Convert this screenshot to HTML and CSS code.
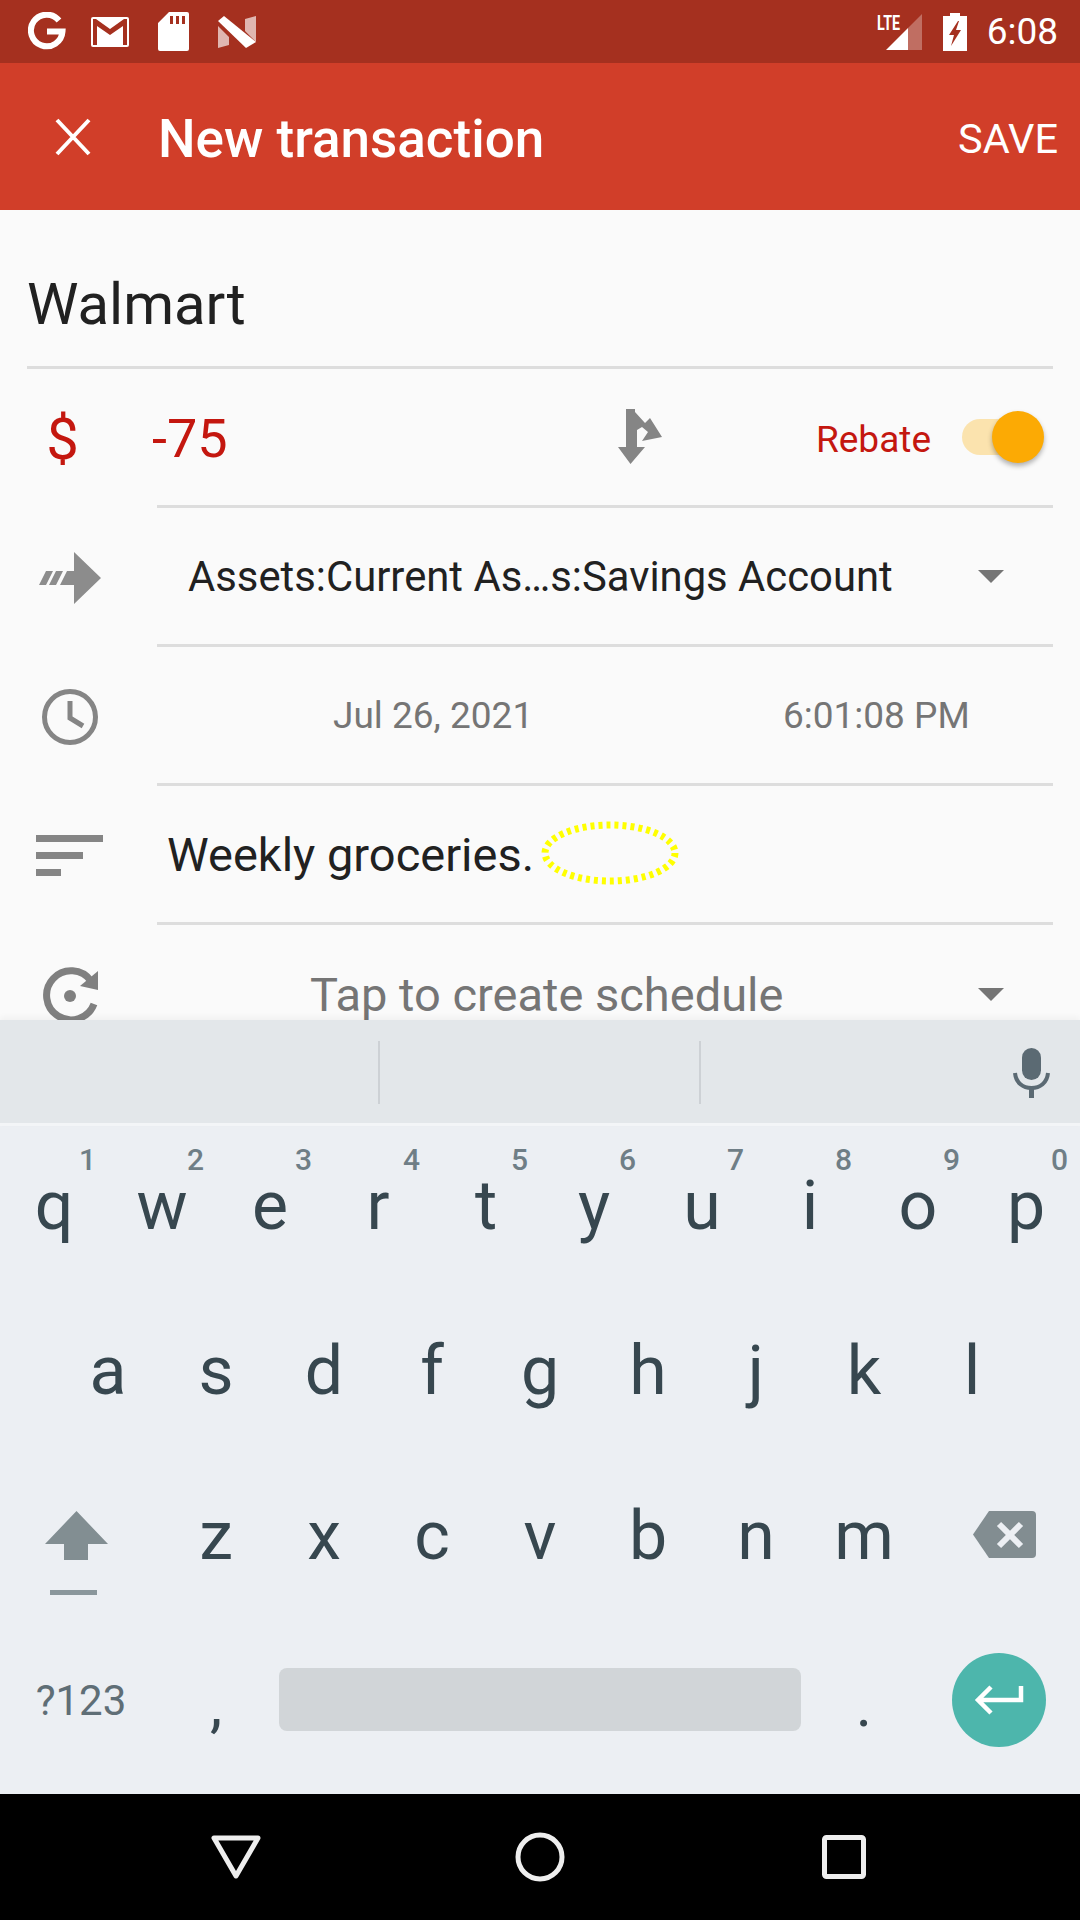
FILE: index.html
```html
<!DOCTYPE html>
<html>
<head>
	<meta charset="utf-8">
	<title>New transaction</title>
	<link rel="stylesheet" href="styles.css">
</head>
<body>
<div class="statusbar">
	<svg class="st-g" width="38" height="39" viewBox="0 0 38 39"><path d="M31 8.5A15.8 15.8 0 1 0 34.5 19.5H19" fill="none" stroke="#fff" stroke-width="6"/></svg>
	<svg class="st-mail" width="38" height="30" viewBox="0 0 38 30"><path fill="#fff" fill-rule="evenodd" d="M2 0h34a2 2 0 0 1 2 2v26a2 2 0 0 1-2 2H2a2 2 0 0 1-2-2V2a2 2 0 0 1 2-2zM2 2v26h4V9l13 9 13-9v19h4V2h-3L19 12 5 2z"/></svg>
	<svg class="st-sd" width="31" height="39" viewBox="0 0 31 39"><path fill="#fff" fill-rule="evenodd" d="M11 0h18a2 2 0 0 1 2 2v35a2 2 0 0 1-2 2H2a2 2 0 0 1-2-2V11zM12 4v8h3V4zM18 4v8h3V4zM24 4v8h3V4z"/></svg>
	<svg class="st-n" width="38" height="32" viewBox="0 0 38 32"><path fill="#fff" opacity=".65" d="M0 10l11 11v8l-11 3zM27 3l11-3v26l-11-11z"/><path fill="#fff" d="M0 5l6-5 32 26-10 6z"/></svg>
	<span class="st-fill"></span>
	<svg class="st-signal" width="46" height="38" viewBox="0 0 46 38">
		<text x="0" y="17" class="lte" textLength="23" lengthAdjust="spacingAndGlyphs">LTE</text>
		<path fill="#fff" d="M9 37L31 15v22z"/><path fill="#fff" opacity=".3" d="M31 15L45 1v36H31z"/>
	</svg>
	<svg class="st-batt" width="24" height="38" viewBox="0 0 24 38"><path fill="#fff" fill-rule="evenodd" d="M7 0h10v3h7v35H0V3h7zM15 8L6 22h5l-3 11 10-16h-5l3-9z"/></svg>
	<span class="st-time">6:08</span>
</div>

<div class="appbar">
	<svg class="close" width="36" height="38" viewBox="0 0 36 38"><path d="M2 2l32 34M34 2L2 36" stroke="#fff" stroke-width="4" fill="none"/></svg>
	<span class="title">New transaction</span>
	<span class="save">SAVE</span>
</div>

<div class="form">
	<div class="name">Walmart</div>

	<div class="row">
		<div class="ico dollar">$</div>
		<div class="cell">
			<span class="amount">-75</span>
			<svg class="split" width="46" height="56" viewBox="0 0 46 56"><path fill="#858585" d="M8 0h9v3l10 11 5-5 12 19-20 4 6-9-6-5-5 3v17h8L12.500 55 0 38h8z"/></svg>
			<span class="rebate">Rebate</span>
			<span class="toggle"><span class="thumb"></span></span>
		</div>
	</div>

	<div class="row">
		<div class="ico">
			<svg width="62" height="52" viewBox="0 0 62 52"><path fill="#8c8c8c" d="M35 0l27 26-27 26V33H21l7-14h7zM7 19h7l-7 14H0zM17 19h7l-7 14h-7z"/></svg>
		</div>
		<div class="cell">
			<span class="account">Assets:Current As…s:Savings Account</span>
			<span class="caret"></span>
		</div>
	</div>

	<div class="row">
		<div class="ico">
			<svg width="58" height="58" viewBox="0 0 58 58"><circle cx="29" cy="29" r="25.500" fill="none" stroke="#858585" stroke-width="5"/><path d="M29 13v17l13 8" fill="none" stroke="#858585" stroke-width="5"/></svg>
		</div>
		<div class="cell dates">
			<span class="date">Jul 26, 2021</span>
			<span class="time">6:01:08 PM</span>
		</div>
	</div>

	<div class="row">
		<div class="ico lines"><i class="l1"></i><i class="l2"></i><i class="l3"></i></div>
		<div class="cell">
			<span class="desc">Weekly groceries.</span>
			<svg class="scribble" width="140" height="68" viewBox="0 0 140 68"><ellipse cx="70" cy="33" rx="65" ry="28" fill="none" stroke="#ffff00" stroke-width="7" stroke-dasharray="4 4"/></svg>
		</div>
	</div>

	<div class="row">
		<div class="ico">
			<svg width="58" height="58" viewBox="0 0 58 58"><path d="M50 15A24.500 24.500 0 1 0 53 38" fill="none" stroke="#808080" stroke-width="7"/><path fill="#808080" d="M57 5v19l-18-4z"/><circle cx="29" cy="30" r="6" fill="#808080"/></svg>
		</div>
		<div class="cell sched">
			<span class="tap">Tap to create schedule</span>
			<span class="caret"></span>
		</div>
	</div>
</div>

<div class="strip">
	<span class="sep sep1"></span>
	<span class="sep sep2"></span>
	<svg class="mic" width="37" height="50" viewBox="0 0 37 50"><rect x="9" y="0" width="19" height="32" rx="9.500" fill="#5b6a73"/><path d="M2 25c1 10 8 15 16.500 15S34 35 35 25" fill="none" stroke="#5b6a73" stroke-width="4"/><path d="M18.500 38v12" stroke="#5b6a73" stroke-width="5"/></svg>
</div>

<div class="keyboard">
	<div class="keys top">
		<span class="key">q<sup>1</sup></span>
		<span class="key">w<sup>2</sup></span>
		<span class="key">e<sup>3</sup></span>
		<span class="key">r<sup>4</sup></span>
		<span class="key">t<sup>5</sup></span>
		<span class="key">y<sup>6</sup></span>
		<span class="key">u<sup>7</sup></span>
		<span class="key">i<sup>8</sup></span>
		<span class="key">o<sup>9</sup></span>
		<span class="key">p<sup>0</sup></span>
	</div>
	<div class="keys home">
		<span class="key">a</span>
		<span class="key">s</span>
		<span class="key">d</span>
		<span class="key">f</span>
		<span class="key">g</span>
		<span class="key">h</span>
		<span class="key">j</span>
		<span class="key">k</span>
		<span class="key">l</span>
	</div>
	<div class="keys">
		<span class="key wide shift">
			<svg width="63" height="84" viewBox="0 0 63 84"><path fill="#828e92" d="M31.500 0L63 33H43v16H19V33H0z"/><rect x="5" y="79" width="47" height="5" fill="#8a969b"/></svg>
		</span>
		<span class="key">z</span>
		<span class="key">x</span>
		<span class="key">c</span>
		<span class="key">v</span>
		<span class="key">b</span>
		<span class="key">n</span>
		<span class="key">m</span>
		<span class="key wide back">
			<svg width="63" height="47" viewBox="0 0 63 47"><path fill="#828d91" d="M16 0h43a4 4 0 0 1 4 4v39a4 4 0 0 1-4 4H16L0 23.500z"/><path d="M26 13l22 22M48 13L26 35" stroke="#eceff3" stroke-width="6" fill="none"/></svg>
		</span>
	</div>
	<div class="keys">
		<span class="key wide sym">?123</span>
		<span class="key punct">,</span>
		<span class="key space"><span class="bar"></span></span>
		<span class="key punct">.</span>
		<span class="key wide go">
			<span class="enter">
				<svg width="50" height="32" viewBox="0 0 50 32"><path d="M47 2v14H5M17 3L4 16l13 13" fill="none" stroke="#fff" stroke-width="4.500"/></svg>
			</span>
		</span>
	</div>
</div>

<div class="navbar">
	<span class="nav nav-back"><svg width="50" height="44" viewBox="0 0 50 44"><path d="M3 3h44L25 41z" fill="none" stroke="#eee" stroke-width="5" stroke-linejoin="round"/></svg></span>
	<span class="nav"><svg width="50" height="50" viewBox="0 0 50 50"><circle cx="25" cy="25" r="22" fill="none" stroke="#eee" stroke-width="5"/></svg></span>
	<span class="nav nav-rec"><svg width="44" height="44" viewBox="0 0 44 44"><rect x="2.500" y="2.500" width="39" height="39" rx="2" fill="none" stroke="#eee" stroke-width="5"/></svg></span>
</div>
</body>
</html>
```

FILE: styles.css
```css
* {box-sizing:border-box;}
html, body {margin:0;padding:0;}
body {
	width:1080px;
	height:1920px;
	overflow:hidden;
	background:#fafafa;
	font-family:Roboto, "Liberation Sans", sans-serif;
	display:flex;
	flex-direction:column;
}

/* status bar */
.statusbar {
	height:63px;
	flex:none;
	background:#a5301f;
	display:flex;
	align-items:center;
	padding:0 22px 0 28px;
}
.st-g {margin-right:25px;}
.st-mail {margin-right:29px;}
.st-sd {margin-right:29px;}
.st-fill {flex:1;}
.st-signal {margin-right:20px;overflow:visible;}
.st-batt {margin-right:20px;}
.lte {font:700 21px Roboto, sans-serif;fill:#fff;}
.st-time {color:#fff;font-size:37px;}

/* app bar */
.appbar {
	height:147px;
	flex:none;
	background:#d13e29;
	color:#fff;
	display:flex;
	align-items:center;
	padding:0 22px 0 55px;
}
.close {margin-right:67px;}
.title {font-size:53px;font-weight:500;flex:1;padding-top:4px;}
.save {font-size:41.500px;padding-top:4px;}

/* form */
.form {
	height:810px;
	flex:none;
	overflow:hidden;
}
.name {
	height:159px;
	margin:0 27px;
	padding-top:62px;
	border-bottom:3px solid #ddd;
	font-size:58px;
	line-height:64px;
	color:#212121;
}
.row {
	display:flex;
	height:139px;
}
.ico {
	width:157px;
	flex:none;
	padding-right:17px;
	display:flex;
	align-items:center;
	justify-content:center;
}
.cell {
	flex:1;
	margin-right:27px;
	border-bottom:3px solid #ddd;
	display:flex;
	align-items:center;
	position:relative;
}
.dollar {font-size:58px;color:#c4170f;padding-right:32px;}
.amount {font-size:54px;color:#c4170f;margin-left:-5px;width:466px;padding-top:2px;}
.split {margin-right:auto;}
.rebate {font-size:37px;color:#c4170f;margin-right:31px;padding-top:4px;}
.toggle {
	width:68px;
	height:36px;
	margin-right:23px;
	border-radius:18px;
	background:#fbe3ae;
	position:relative;
}
.thumb {
	position:absolute;
	right:-14px;
	top:-8px;
	width:52px;
	height:52px;
	border-radius:50%;
	background:#fcaa04;
	box-shadow:0 3px 5px rgba(0,0,0,.3);
}
.account {font-size:41.800px;color:#212121;margin-left:31px;flex:1;white-space:nowrap;}
.caret {
	width:0;
	height:0;
	margin-right:49px;
	border-left:13px solid transparent;
	border-right:13px solid transparent;
	border-top:13px solid #757575;
}
.date {font-size:37px;color:#757575;margin-left:176px;width:450px;}
.time {font-size:37px;color:#757575;}
.lines {flex-direction:column;align-items:flex-start;padding-left:36px;}
.lines i {display:block;height:7px;background:#858585;margin:5px 0;}
.l1 {width:67px;}
.l2 {width:47px;}
.l3 {width:25px;}
.desc {font-size:47px;color:#212121;margin-left:10px;}
.scribble {margin-left:6px;}
.sched {border:0;}
.tap {font-size:47px;color:#757575;margin-left:153px;flex:1;}

/* keyboard */
.strip {
	height:106px;
	flex:none;
	background:#e3e7ea;
	border-bottom:3px solid #f3f5f7;
	box-shadow:0 -3px 6px rgba(0,0,0,.04);
	position:relative;
}
.sep {position:absolute;top:21px;width:2px;height:63px;background:#cdd1d5;}
.sep1 {left:378px;}
.sep2 {left:699px;}
.mic {position:absolute;left:1013px;top:28px;}
.keyboard {
	height:668px;
	flex:none;
	background:#eceff3;
}
.keys {
	display:flex;
	height:165px;
}
.top {height:162px;}
.home {padding:0 54px;}
.key {
	flex:1;
	display:flex;
	align-items:center;
	justify-content:center;
	position:relative;
	color:#37474f;
	font-size:68px;
}
.top .key {padding-bottom:3px;}
.key sup {
	position:absolute;
	top:19px;
	left:79px;
	font-size:30px;
	line-height:30px;
	font-weight:500;
	color:#6f7e86;
}
.wide {flex:none;width:162px;}
.shift {padding:34px 10px 0 0;}
.back {padding:0 0 3px 10px;}
.sym {font-size:42px;color:#5f6e76;}
.punct {font-size:62px;padding:8px 0 0;}
.space {flex:none;width:540px;padding-bottom:2px;}
.go {padding-bottom:1px;}
.bar {
	width:522px;
	height:63px;
	border-radius:8px;
	background:#d1d5d8;
}
.enter {
	width:94px;
	height:94px;
	border-radius:50%;
	background:#4db6ac;
	display:flex;
	align-items:center;
	justify-content:center;
}

/* nav */
.navbar {
	flex:1;
	background:#000;
	display:flex;
	justify-content:center;
	align-items:center;
}
.nav {width:306px;display:flex;justify-content:center;}
.nav-back {padding-left:4px;}
.nav-rec {padding-right:4px;}
```
